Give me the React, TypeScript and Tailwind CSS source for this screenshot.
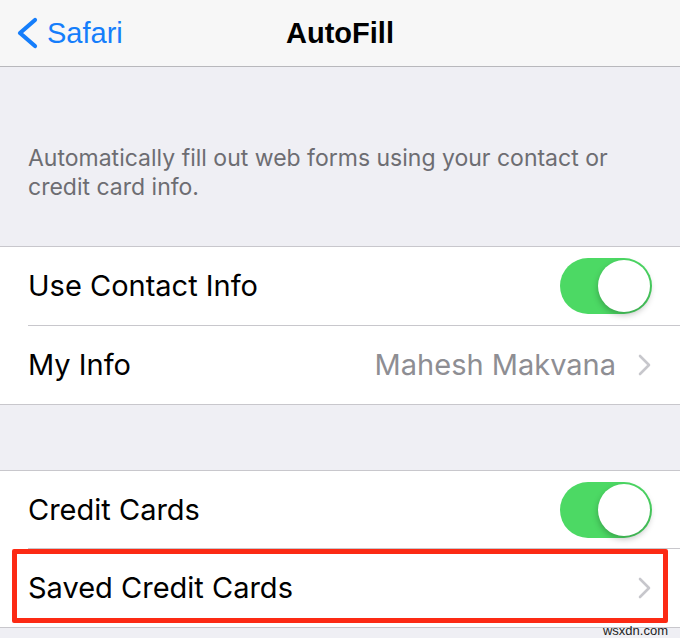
import React from "react"

const navFont = { fontFamily: '"Liberation Sans", Arial, sans-serif' }
const bodyFont = { fontFamily: 'Inter, "Liberation Sans", Arial, sans-serif' }

function Toggle() {
  return (
    <div className="relative h-[56px] w-[92px] rounded-full bg-[#4cd964]">
      <div className="absolute right-[2px] top-[2px] h-[52px] w-[52px] rounded-full bg-white shadow-[0_3px_6px_rgba(0,0,0,0.25)]" />
    </div>
  )
}

function Chevron() {
  return (
    <svg width="14" height="22" viewBox="0 0 14 22" fill="none">
      <path d="M2 2l9 9-9 9" stroke="#c7c7cc" strokeWidth="2.6" strokeLinecap="round" strokeLinejoin="round" />
    </svg>
  )
}

export default function App() {
  return (
    <div className="relative h-[638px] w-[680px] overflow-hidden bg-[#efeff4]" style={bodyFont}>
      {/* Nav bar */}
      <div className="relative flex h-[67px] items-center border-b border-[#b8b8bc] bg-[#f7f7f7]" style={navFont}>
        <div className="flex items-center pl-[15px] text-[#157efb]">
          <svg width="24" height="32" viewBox="0 0 24 32" fill="none">
            <path d="M20 3L5 16l15 13" stroke="#157efb" strokeWidth="4.2" strokeLinecap="round" strokeLinejoin="round" />
          </svg>
          <span className="ml-[8px] text-[29px] leading-none">Safari</span>
        </div>
        <div className="absolute left-0 right-0 text-center text-[29px] font-bold leading-none text-black">AutoFill</div>
      </div>

      {/* Description */}
      <div className="h-[179px] px-[28px] pt-[77px] text-[23px] leading-[29px] text-[#6d6d72]">
        Automatically fill out web forms using your contact or credit card info.
      </div>

      {/* Group 1 */}
      <div className="border-y border-[#c8c7cc] bg-white">
        <div className="flex h-[78px] items-center justify-between pl-[28px] pr-[28px]">
          <span className="text-[29px] text-black">Use Contact Info</span>
          <Toggle />
        </div>
        <div className="ml-[28px] h-px bg-[#c8c7cc]" />
        <div className="flex h-[78px] items-center justify-between pl-[28px] pr-[28px]">
          <span className="text-[29px] text-black">My Info</span>
          <div className="flex items-center gap-[22px]">
            <span className="text-[29px] text-[#8e8e93]">Mahesh Makvana</span>
            <Chevron />
          </div>
        </div>
      </div>

      <div className="h-[65px]" />

      {/* Group 2 */}
      <div className="border-y border-[#c8c7cc] bg-white">
        <div className="flex h-[77px] items-center justify-between pl-[28px] pr-[28px]">
          <span className="text-[29px] text-black">Credit Cards</span>
          <Toggle />
        </div>
        <div className="ml-[28px] h-px bg-[#c8c7cc]" />
        <div className="relative flex h-[78px] items-center justify-between pl-[28px] pr-[28px]">
          <span className="text-[29px] text-black">Saved Credit Cards</span>
          <Chevron />
          <div className="absolute bottom-[4px] left-[12px] right-[12px] top-0 rounded-[2px] border-[5px] border-[#fc2a14]" />
        </div>
      </div>

      <div className="absolute bottom-[1px] right-[12px] text-[13px] leading-none text-[#222]" style={navFont}>wsxdn.com</div>
    </div>
  )
}
